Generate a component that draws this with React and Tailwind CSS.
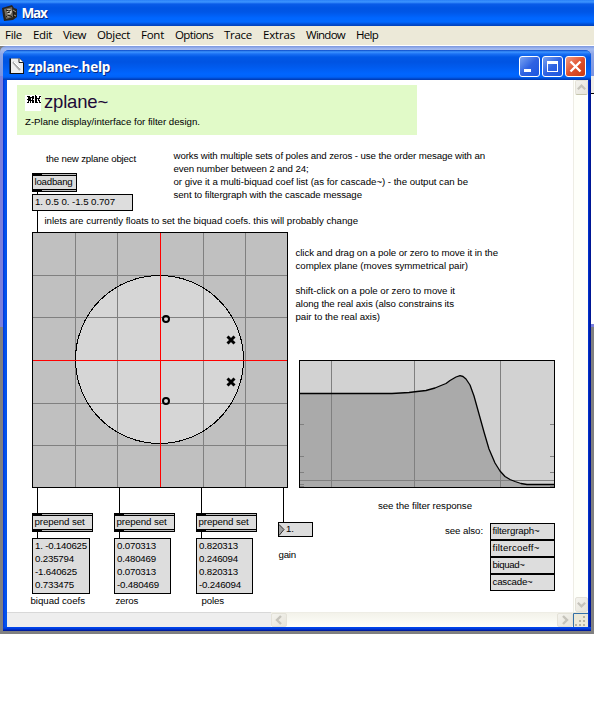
import { useLayoutEffect, useRef } from "react";

/* Single text line whose tracking is adjusted to fill the given width. */
function Fit({ w, className = "", children }) {
  const ref = useRef(null);
  useLayoutEffect(() => {
    const el = ref.current;
    const n = el.textContent.length;
    el.style.letterSpacing = "0px";
    const natural = el.getBoundingClientRect().width;
    el.style.letterSpacing = (w - natural) / n + "px";
  }, [w]);
  return (
    <span ref={ref} className={"inline-block whitespace-pre [font-variant-ligatures:none] " + className}>
      {children}
    </span>
  );
}

/* Canvas coordinates are counted from the application window's corner. */
const at = (x, y, w, h) => ({ left: x - 7, top: y - 80, width: w, height: h });

const comments = [
  [46, 162, 90, "the new zplane object"],
  [173.5, 159, 311.5, "works with multiple sets of poles and zeros - use the order mesage with an"],
  [173.5, 172, 135, "even number between 2 and 24;"],
  [173.5, 185, 294.5, "or give it a multi-biquad coef list (as for cascade~) - the output can be"],
  [173.5, 198, 188.5, "sent to filtergraph with the cascade message"],
  [44.5, 224, 313.5, "inlets are currently floats to set the biquad coefs. this will probably change"],
  [295.5, 256, 202.5, "click and drag on a pole or zero to move it in the"],
  [295.5, 269, 172.5, "complex plane (moves symmetrical pair)"],
  [295.5, 294, 159.5, "shift-click on a pole or zero to move it"],
  [295.5, 307, 158.5, "along the real axis (also constrains its"],
  [295.5, 320, 84.5, "pair to the real axis)"],
  [378, 509, 94, "see the filter response"],
  [445, 534, 38, "see also:"],
  [278.5, 558, 17.5, "gain"],
  [30.5, 604, 54.5, "biquad coefs"],
  [115.5, 604, 22.5, "zeros"],
  [201.5, 604, 22.5, "poles"],
];

const objects = [
  [32, 173, 45, 38, "loadbang"],
  [32, 513, 61, 50, "prepend set"],
  [114, 513, 61, 50, "prepend set"],
  [196, 513, 61, 50, "prepend set"],
];

const messages = [
  [32, 194, 101, 17, [["1. 0.5 0. -1.5 0.707", 80]]],
  [32, 538, 58, 56, [["1. -0.140625", 52], ["0.235794", 39], ["-1.640625", 42], ["0.733475", 39]]],
  [114, 538, 57, 56, [["0.070313", 39], ["0.480469", 39], ["0.070313", 39], ["-0.480469", 42]]],
  [196, 538, 57, 56, [["0.820313", 39], ["0.246094", 39], ["0.820313", 39], ["-0.246094", 42]]],
];

const links = [
  ["filtergraph~", 47],
  ["filtercoeff~", 47],
  ["biquad~", 32],
  ["cascade~", 40],
];

const wires = [
  [37, 192, 2],
  [37, 211, 21],
  [37, 488, 25],
  [119, 488, 25],
  [201, 488, 25],
  [283, 488, 34],
  [37, 532, 6],
  [119, 532, 6],
  [201, 532, 6],
];

function PatchObject({ x, y, w, tw, text }) {
  return (
    <div className="absolute flex flex-col border-x border-black bg-[#dddddd]" style={at(x, y, w, 19)}>
      <div className="h-[3px] border-y border-black bg-[#bbbbbb]">
        <div className="-mt-px h-[3px] w-[9px] bg-black" />
      </div>
      <div className="h-[13px] pl-[1.5px] leading-[11px]">
        <Fit w={tw}>{text}</Fit>
      </div>
      <div className="h-[3px] border-y border-black bg-[#bbbbbb]">
        <div className="-mt-px h-[3px] w-[9px] bg-black" />
      </div>
    </div>
  );
}

function Message({ x, y, w, h, lines }) {
  return (
    <div className="absolute border border-black bg-[#dddddd] pl-[2px] leading-[13px]" style={at(x, y, w, h)}>
      {lines.map(([t, tw], i) => (
        <div key={i} className="h-[13px]">
          <Fit w={tw}>{t}</Fit>
        </div>
      ))}
    </div>
  );
}

function ZPlane() {
  return (
    <svg className="absolute" style={at(32, 232, 256, 256)} viewBox="32 232 256 256">
      <rect x="32.5" y="232.5" width="255" height="255" fill="#c0c0c0" />
      <circle cx="159.5" cy="359.5" r="84" fill="#d6d6d6" />
      <g stroke="#808080">
        {[75.5, 117.5, 203.5, 245.5].map((x) => (
          <path key={x} d={`M${x} 233V487`} />
        ))}
        {[275.5, 317.5, 403.5, 445.5].map((y) => (
          <path key={y} d={`M33 ${y}H287`} />
        ))}
      </g>
      <circle cx="159.5" cy="359.5" r="84" fill="none" stroke="#000" shapeRendering="crispEdges" />
      <path d="M160.5 233V487M33 360.5H287" stroke="#ff0000" />
      <g fill="none" stroke="#000" strokeWidth="2">
        <circle cx="166" cy="319" r="3" />
        <circle cx="166" cy="401" r="3" />
      </g>
      <path
        d="M227.5 336.5l7 7M234.5 336.5l-7 7M227.5 378.500l7 7M234.5 378.500l-7 7"
        stroke="#000"
        strokeWidth="2.9"
      />
      <rect x="32.5" y="232.5" width="255" height="255" fill="none" stroke="#000" />
    </svg>
  );
}

const response =
  "M299 393.5H392L409 392.500L417 391.500L426 390.500L435 388L441 385.500L446 383.500L450 380.500L456 377L460 375.700L463 376.500L466 379L470 385L474 396L479 414L484 432L489 449L495 463L500 471L505 476.500L510 479.500L515 481.500L521 483.500L527 484.500H555";

function FilterGraph() {
  return (
    <svg className="absolute" style={at(299, 360, 256, 128)} viewBox="299 360 256 128">
      <rect x="299" y="360" width="256" height="128" fill="#d2d2d2" />
      <path d={response + "V488H299Z"} fill="#aaaaaa" />
      <g stroke="#808080">
        <path d="M331.5 361V487M414.5 361V487M500.5 361V487M299 480.500H555" />
        {[424.5, 456.5, 472.5, 484.5, 486.5].map((y) => (
          <path key={y} d={`M300 ${y}h4M550 ${y}h4`} />
        ))}
      </g>
      <path d={response} fill="none" stroke="#000" strokeWidth="1.3" strokeLinejoin="round" />
      <rect x="299.5" y="360.5" width="255" height="127" fill="none" stroke="#000" />
    </svg>
  );
}

function Header() {
  return (
    <div className="absolute bg-[#e1fac8]" style={at(17, 85, 400, 50)}>
      <div className="flex h-[30px] items-start pt-[7px] pl-2">
        <div className="mt-[3px] h-4 w-4 bg-white">
          <svg width="16" height="16" shapeRendering="crispEdges">
            <path
              d="M2 1h3v1h1v6h-1v-2h-1v2h-2v-1h1v-2h-1v-1h1v-2h-1zM6 2h1v-1h2v3h-1v1h1v3h-2v-2h-1v-1h1v-2h-1zM10 0h1v8h-1zM11 1h1v2h1v1h-1v3h1v1h-2zM14 1h2v1h-1v2h-1v1h1v2h1v1h-2v-2h-1v-3h1z"
              fill="#000"
            />
          </svg>
        </div>
        <div className="ml-[3px] text-[18.5px] leading-[20px] text-[#1e0a37]">
          <Fit w={64}>zplane~</Fit>
        </div>
      </div>
      <div className="pl-2 leading-[13px]">
        <Fit w={175}>Z-Plane display/interface for filter design.</Fit>
      </div>
    </div>
  );
}

function Patcher() {
  return (
    <div className="relative flex-1 bg-white font-['Liberation_Sans',sans-serif] text-[9.7px] text-black">
      <Header />
      {wires.map(([x, y, h], i) => (
        <div key={i} className="absolute bg-black" style={at(x, y, 1, h)} />
      ))}
      {comments.map(([x, y, w, t]) => (
        <div key={t} className="absolute leading-[13px]" style={at(x, y - 10, w + 4, 13)}>
          <Fit w={w}>{t}</Fit>
        </div>
      ))}
      {objects.map(([x, y, w, tw, t], i) => (
        <PatchObject key={i} x={x} y={y} w={w} tw={tw} text={t} />
      ))}
      {messages.map(([x, y, w, h, lines], i) => (
        <Message key={i} x={x} y={y} w={w} h={h} lines={lines} />
      ))}
      <ZPlane />
      <FilterGraph />
      <div className="absolute flex border border-black bg-[#dddddd] leading-[12px]" style={at(278, 522, 35, 15)}>
        <svg width="7" height="13" className="shrink-0">
          <path d="M0 1L5 6.500L0 13Z" fill="#a0a0a0" />
          <path d="M0 1.500L5 6.500L0 12.500" fill="none" stroke="#333" />
        </svg>
        <Fit w={8}>1.</Fit>
      </div>
      <div className="absolute flex flex-col" style={at(490, 523, 65, 68)}>
        {links.map(([t, w]) => (
          <div key={t} className="h-[17px] border border-black bg-[#dddddd] pl-[1.5px] leading-[13px]">
            <Fit w={w}>{t}</Fit>
          </div>
        ))}
      </div>
    </div>
  );
}

function ScrollButton({ d, className }) {
  return (
    <div
      className={
        "shrink-0 rounded-[2px] border border-[#e4e2d8] bg-gradient-to-br from-[#f4f3ee] to-[#e6e4da] " + className
      }
    >
      <svg className="h-full w-full" viewBox="0 0 12 12">
        <path d={d} fill="none" stroke="#c5c3bb" strokeWidth="2.4" />
      </svg>
    </div>
  );
}

function CaptionButton({ red, children }) {
  return (
    <div
      className={
        "h-[21px] w-[21px] rounded-[3px] border border-white bg-gradient-to-br " +
        (red ? "from-[#f09a80] via-[#e0502c] to-[#c93a10]" : "from-[#7ba2f0] via-[#2f62e2] to-[#1c56e0]")
      }
    >
      <svg width="19" height="19">
        {children}
      </svg>
    </div>
  );
}

function MaxIcon() {
  return (
    <svg width="16" height="17">
      <path d="M0 3L10 0L12 3L15 4V12L11 15L2 16L1 11Z" fill="#29241e" />
      <path d="M2 4L10 2L11 12L4 14Z" fill="#706a60" />
      <path d="M5 4.500L9 4L10 7L8 10L5 9Z" fill="#c9c6be" />
      <path d="M4 5l3 1 2-1M5 8l3-1M4 12l3-2 3 2M12 6v6" stroke="#17130f" fill="none" />
      <path d="M11 5l3 2M5 11l2 1M12 10l2 1" stroke="#a49a88" />
    </svg>
  );
}

function HelpWindow() {
  return (
    <div className="absolute top-[50px] left-[3px] flex h-[581px] w-[588px] flex-col overflow-hidden rounded-t-[6px] bg-[linear-gradient(90deg,#0831d9_0,#0055ea_2px,#0650ec_4px,#0650ec_584px,#0038dc_585px,#001a9c_587px,#00138c_588px)]">
      <div className="flex h-[30px] shrink-0 items-center bg-[linear-gradient(#0a48c8_0,#3d95ff_2px,#1a70f4_4px,#0058e6_7px,#0054e3_12px,#005cf0_18px,#0066ff_24px,#0062f8_27px,#0044c4_29px,#0038b0_30px)] pr-[5px] pl-[6px]">
        <svg width="15" height="17" className="mt-[2px] shrink-0">
          <path d="M0.500 0.500H11L15 5V16H0.500Z" fill="#111" />
          <path d="M2 0.500H10.500L14 4V15H2Z" fill="#eeeeee" />
          <path d="M10 0.500V4.500H14" fill="#fff" stroke="#222" />
          <path d="M4 4L11 12" stroke="#aaa" strokeWidth="2" />
          <path d="M5 4L11 10" stroke="#fff" />
        </svg>
        <div className="ml-1 pt-[3px] font-['Open_Sans',sans-serif] text-[13.5px] leading-[18px] font-bold text-white [text-shadow:1px_1px_0_#0a2a80]">
          <Fit w={82}>zplane~.help</Fit>
        </div>
        <div className="ml-auto flex gap-[2px] pt-[3px]">
          <CaptionButton>
            <rect x="4" y="12" width="7" height="3" fill="#fff" />
          </CaptionButton>
          <CaptionButton>
            <path d="M4 4h11v11h-11zM5 7v7h9v-7z" fill="#fff" fillRule="evenodd" />
          </CaptionButton>
          <CaptionButton red>
            <path d="M4.500 4.500l10 10M14.500 4.500l-10 10" stroke="#fff" strokeWidth="2.4" />
          </CaptionButton>
        </div>
      </div>
      <div className="mr-[3px] ml-1 flex h-[532px] bg-white">
        <Patcher />
        <div className="flex w-[15px] flex-col justify-between border-l border-[#eeede5] bg-[#fefffa]">
          <ScrollButton className="ml-px h-[15px] w-[13px] border-b-[#c5c5ac]" d="M2 8l4-4 4 4" />
          <ScrollButton className="ml-px h-[15px] w-[13px]" d="M2 4l4 4 4-4" />
        </div>
      </div>
      <div className="mr-[3px] ml-1 flex h-[15px]">
        <div className="w-[264px] border-t border-[#d8d8d8] bg-[#eeeeee]" />
        <div className="flex flex-1 justify-between border-t border-[#eeede5] bg-gradient-to-b from-[#f3f2ea] to-[#fefffa]">
          <ScrollButton className="h-[14px] w-4" d="M8 2l-4 4 4 4" />
          <ScrollButton className="h-[14px] w-4" d="M4 2l4 4-4 4" />
        </div>
        <svg width="15" height="15" className="shrink-0 bg-[#ece9d8]">
          <path d="M0.500 15V1.500H15" stroke="#3470a8" fill="none" />
          <path d="M10 4h2v2h-2zM10 8h2v2h-2zM10 12h2v2h-2zM6 8h2v2h-2zM6 12h2v2h-2zM2 12h2v2h-2z" fill="#b8b4a2" />
        </svg>
      </div>
      <div className="h-[4px] bg-[linear-gradient(#0048f0,#0038d8_50%,#00138c)]" />
    </div>
  );
}

const menus = [
  ["File", 5, 17],
  ["Edit", 33, 19],
  ["View", 63, 23],
  ["Object", 97, 33],
  ["Font", 141, 23],
  ["Options", 175, 38],
  ["Trace", 224, 28],
  ["Extras", 263, 32],
  ["Window", 306, 39],
  ["Help", 356, 22],
];

export default function App() {
  return (
    <div className="h-[714px] w-[606px] overflow-hidden bg-white">
      <div className="relative flex h-[634px] w-[594px] flex-col overflow-hidden bg-[#808080]">
        <div className="flex h-[26px] shrink-0 items-center bg-[linear-gradient(#2a80f8_0,#3d95ff_2px,#0a5ce8_4px,#0054e3_8px,#0056e6_12px,#0066ff_18px,#0068ff_22px,#0050d8_24px,#0040b8_26px)] pl-[2px]">
          <MaxIcon />
          <div className="ml-[3.5px] font-['Open_Sans',sans-serif] text-[13.5px] leading-[18px] font-bold text-white [text-shadow:1px_1px_0_#0a2a80]">
            <Fit w={25}>Max</Fit>
          </div>
        </div>
        <div className="grid h-[20px] shrink-0 border-b border-white bg-[#ece9d8] font-['Open_Sans',sans-serif] text-[11.5px] leading-[18px] text-black">
          {menus.map(([t, x, w]) => (
            <div key={t} className="col-start-1 row-start-1 h-[19px]" style={{ paddingLeft: x }}>
              <Fit w={w}>{t}</Fit>
            </div>
          ))}
        </div>
        <div className="flex h-[30px] shrink-0 justify-end rounded-tl-[6px] bg-[linear-gradient(#7a96df_0,#a5bcf0_3px,#8ea6e6_8px,#7b94e0_30px)]" />
        <div className="flex flex-1 justify-between">
          <div className="h-[251px] w-[3px] bg-[#7b7fdb]" />
          <div className="h-[251px] w-[3px] bg-[#7b7fdb]">
            <div className="h-[17px] bg-[#f0eee8]" />
            <div className="h-px bg-black" />
            <div className="h-[230px] bg-white" />
          </div>
        </div>
        <HelpWindow />
      </div>
    </div>
  );
}
